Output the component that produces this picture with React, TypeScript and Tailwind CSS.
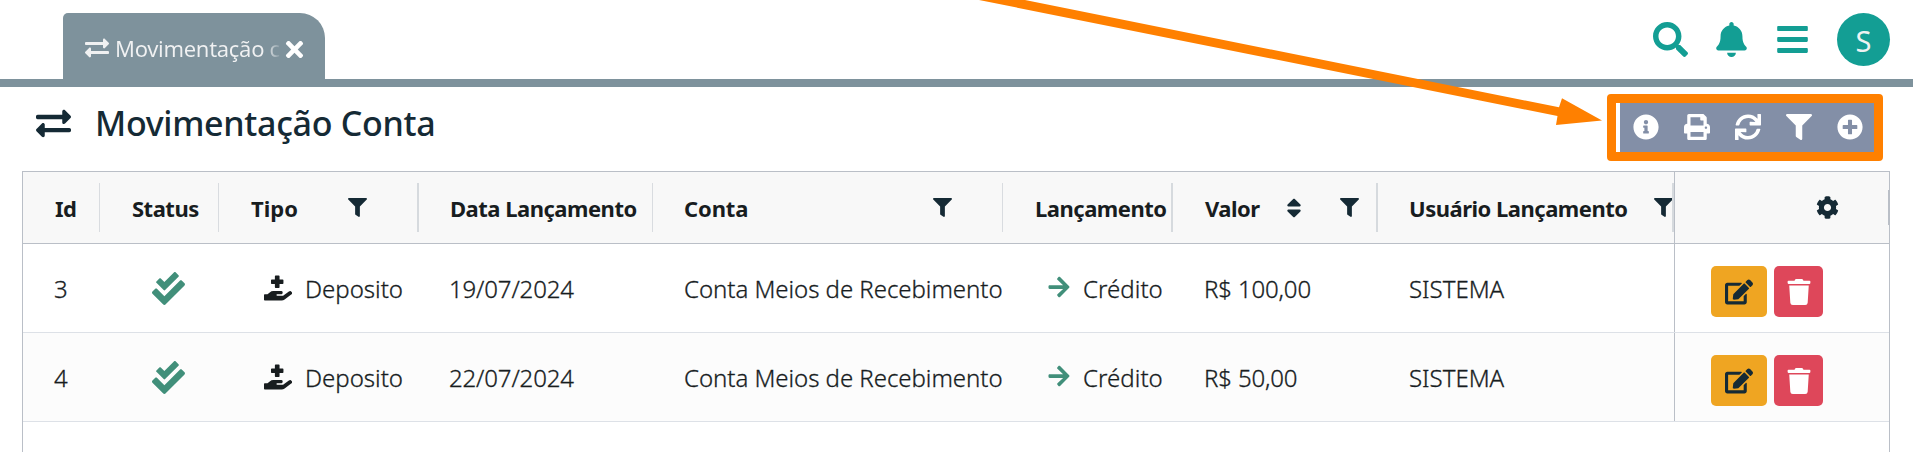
import type { ReactNode } from 'react';
import {
  FaExchangeAlt,
  FaTimes,
  FaSearch,
  FaBell,
  FaBars,
  FaInfoCircle,
  FaPrint,
  FaSync,
  FaFilter,
  FaPlusCircle,
  FaSort,
  FaCog,
  FaCheckDouble,
  FaHandHoldingMedical,
  FaArrowRight,
  FaEdit,
  FaTrash,
} from 'react-icons/fa';

const COLUMNS =
  'grid grid-cols-[77px_119px_200px_234px_350px_170px_205px_296px_215px]';

interface Entry {
  id: number;
  tipo: string;
  data: string;
  conta: string;
  lancamento: string;
  valor: string;
  usuario: string;
}

const entries: Entry[] = [
  { id: 3, tipo: 'Deposito', data: '19/07/2024', conta: 'Conta Meios de Recebimento', lancamento: 'Crédito', valor: 'R$ 100,00', usuario: 'SISTEMA' },
  { id: 4, tipo: 'Deposito', data: '22/07/2024', conta: 'Conta Meios de Recebimento', lancamento: 'Crédito', valor: 'R$ 50,00', usuario: 'SISTEMA' },
];

function HeaderCell({ children, divider }: { children: ReactNode; divider: 'thin' | 'thick' }) {
  const line = {
    thin: 'w-px bg-[#d9dce0]',
    thick: 'w-[2px] bg-[#d6dade]',
  }[divider];
  return (
    <div className="flex h-full items-center">
      <div className="flex min-w-0 flex-1 items-center pl-[31px] whitespace-nowrap">{children}</div>
      <div className={`h-[49px] shrink-0 ${line}`} />
    </div>
  );
}

function FilterIcon({ className = '' }: { className?: string }) {
  return <FaFilter className={`size-[19px] shrink-0 text-[#152a35] ${className}`} />;
}

function Cell({ children, className = '' }: { children: ReactNode; className?: string }) {
  return <div className={`flex items-center pt-px pl-[31px] whitespace-nowrap ${className}`}>{children}</div>;
}

function EntryRow({ entry, striped }: { entry: Entry; striped: boolean }) {
  return (
    <div
      className={`${COLUMNS} h-[89px] border-b border-[#dde1e7] text-[24px] leading-none font-light text-[#181d1f] [-webkit-text-stroke:0.3px_#181d1f] ${
        striped ? 'bg-[#fcfcfc]' : 'bg-white'
      }`}
    >
      <Cell>{entry.id}</Cell>
      <div className="flex items-center pl-[52px]">
        <FaCheckDouble className="size-[33px] text-[#418f7a]" />
      </div>
      <div className="flex items-center pt-px pl-[45px] whitespace-nowrap">
        <FaHandHoldingMedical className="mr-[13px] -mt-px size-[28px] shrink-0 text-[#181d1f]" />
        <span>{entry.tipo}</span>
      </div>
      <Cell className="-ml-px tracking-[-0.15px]">{entry.data}</Cell>
      <Cell className="tracking-[-0.04px]">{entry.conta}</Cell>
      <div className="flex items-center pt-px pl-[44px] whitespace-nowrap">
        <FaArrowRight className="mr-3 -mt-[3px] size-[24px] shrink-0 text-[#418f7a]" />
        <span className="tracking-[0.05px]">{entry.lancamento}</span>
      </div>
      <Cell className="tracking-[-0.15px]">{entry.valor}</Cell>
      <Cell>{entry.usuario}</Cell>
      <div className="flex items-center gap-[7px] border-l border-[#babfc7] pt-[7px] pl-[36px]">
        <button className="flex h-[51px] w-[56px] items-center justify-center rounded-[5px] bg-[#efa522]">
          <FaEdit className="size-[28px] text-[#152a35]" />
        </button>
        <button className="flex h-[51px] w-[49px] items-center justify-center rounded-[5px] bg-[#de475a]">
          <FaTrash className="size-[26px] text-white" />
        </button>
      </div>
    </div>
  );
}

function TopBar() {
  return (
    <header className="flex h-[87px] items-end border-b-8 border-[#7e929c] pr-[23px] pl-[63px]">
      <div className="flex h-[66px] w-[262px] items-center rounded-tl-[5px] rounded-tr-[25px] bg-[#7e929c] pt-[4px] pl-[22px]">
        <FaExchangeAlt className="size-[24px] shrink-0 text-[#f0f1f2]" />
        <div className="ml-[6px] w-[167px] overflow-hidden bg-linear-to-r from-[#f0f1f2] from-90% to-[#7e929c] to-100% bg-clip-text text-[22px] leading-[30px] tracking-[-0.3px] whitespace-nowrap text-transparent">
          Movimentação c
        </div>
        <FaTimes className="mt-[3px] size-[25px] shrink-0 text-white" />
      </div>
      <nav className="ml-auto flex items-center pb-[13px] text-[#139e94]">
        <FaSearch className="size-[35px]" />
        <FaBell className="ml-[26px] size-[35px]" />
        <FaBars className="ml-[26px] size-[35px]" />
        <div className="ml-[27px] flex size-[53px] items-center justify-center rounded-full bg-[#139e94] pt-px text-[29px] leading-none text-[#eef3f2]">
          S
        </div>
      </nav>
    </header>
  );
}

function Toolbar() {
  return (
    <div className="flex h-[49px] w-[254px] items-center justify-between bg-[#838fa7] pr-[11px] pb-[2px] pl-[13px] text-white">
      <FaInfoCircle className="size-[26px]" />
      <FaPrint className="size-[26px]" />
      <FaSync className="size-[26px]" />
      <FaFilter className="size-[26px]" />
      <FaPlusCircle className="size-[26px]" />
    </div>
  );
}

export default function App() {
  return (
    <div className="relative h-[452px] w-[1913px] overflow-hidden bg-white font-['Noto_Sans','Open_Sans',sans-serif] text-[#181d1f]">
      <TopBar />

      <div className="flex h-[84px] items-center pr-[39px] pb-[3px] pl-[36px]">
        <div className="flex flex-1 items-center pb-[9px] text-[#152a35]">
          <FaExchangeAlt className="size-[35px]" />
          <h1 className="ml-[24px] text-[34px] leading-none font-medium tracking-[-0.3px]">Movimentação Conta</h1>
        </div>
        <Toolbar />
      </div>

      <main className="mr-[23px] ml-[22px] h-[300px] border border-[#babfc7]">
        <div className={`${COLUMNS} h-[72px] border-b border-[#babfc7] bg-[#f8f8f8] text-[22px] leading-none font-bold tracking-[-0.5px]`}>
          <HeaderCell divider="thin">
            <span className="ml-px">Id</span>
          </HeaderCell>
          <HeaderCell divider="thin">
            <span className="ml-px">Status</span>
          </HeaderCell>
          <HeaderCell divider="thick">
            <span className="ml-px tracking-normal">Tipo</span>
            <FilterIcon className="mr-[50px] ml-auto" />
          </HeaderCell>
          <HeaderCell divider="thin">Data Lançamento</HeaderCell>
          <HeaderCell divider="thin">
            <span className="tracking-[-0.1px]">Conta</span>
            <FilterIcon className="mr-[50px] ml-auto" />
          </HeaderCell>
          <HeaderCell divider="thick">
            <span className="ml-px">Lançamento</span>
          </HeaderCell>
          <HeaderCell divider="thick">
            <span className="ml-px">Valor</span>
            <FaSort className="ml-[22px] size-[24px] text-[#152a35]" />
            <FilterIcon className="mr-[17px] ml-auto" />
          </HeaderCell>
          <HeaderCell divider="thick">
            Usuário Lançamento
            <FilterIcon className="-mr-px ml-auto" />
          </HeaderCell>
          <div className="flex items-center justify-end border-l border-[#babfc7]">
            <FaCog className="mr-[49px] size-[23px] text-[#152a35]" />
            <div className="h-[35px] w-px bg-[#babfc7]" />
          </div>
        </div>
        {entries.map((entry, index) => (
          <EntryRow key={entry.id} entry={entry} striped={index % 2 === 1} />
        ))}
      </main>

      <div className="pointer-events-none absolute top-[94px] left-[1607px] h-[67px] w-[276px] rounded-[4px] border-9 border-[#ff8000]" />
      <svg className="pointer-events-none absolute top-0 left-0" width="1913" height="170" viewBox="0 0 1913 170">
        <polygon points="979,0 1025,0 1559,107.3 1562,98.3 1602,120.5 1556,125 1557.5,116" fill="#ff8000" />
      </svg>
    </div>
  );
}
